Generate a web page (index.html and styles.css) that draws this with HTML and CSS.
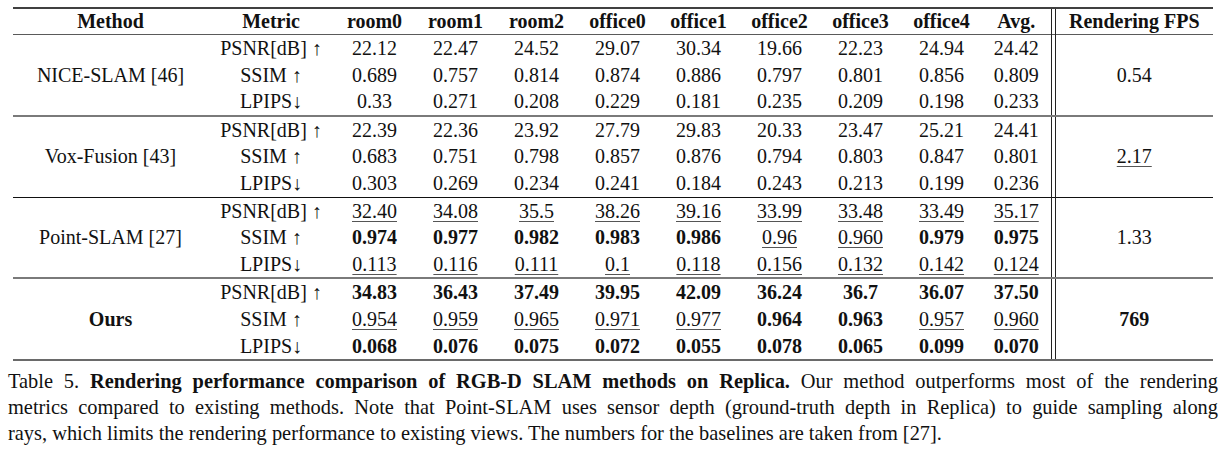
FILE: index.html
```html
<!DOCTYPE html>
<html>
<head>
<meta charset="utf-8">
<link rel="stylesheet" href="styles.css">
</head>
<body>
<table class="results">
  <colgroup>
    <col class="c-method"><col class="c-metric">
    <col class="c-val"><col class="c-val"><col class="c-val"><col class="c-val">
    <col class="c-val"><col class="c-val"><col class="c-val"><col class="c-val">
    <col class="c-avg"><col class="c-sep"><col class="c-fps">
  </colgroup>
  <thead>
    <tr>
      <th>Method</th><th>Metric</th><th>room0</th><th>room1</th><th>room2</th><th>office0</th><th>office1</th><th>office2</th><th>office3</th><th>office4</th><th>Avg.</th><td class="sep"></td><th>Rendering FPS</th>
    </tr>
  </thead>
  <tbody>
    <tr><td rowspan="3">NICE-SLAM [46]</td><td>PSNR[dB] ↑</td><td>22.12</td><td>22.47</td><td>24.52</td><td>29.07</td><td>30.34</td><td>19.66</td><td>22.23</td><td>24.94</td><td>24.42</td><td class="sep"></td><td rowspan="3">0.54</td></tr>
    <tr><td>SSIM ↑</td><td>0.689</td><td>0.757</td><td>0.814</td><td>0.874</td><td>0.886</td><td>0.797</td><td>0.801</td><td>0.856</td><td>0.809</td><td class="sep"></td></tr>
    <tr><td>LPIPS↓</td><td>0.33</td><td>0.271</td><td>0.208</td><td>0.229</td><td>0.181</td><td>0.235</td><td>0.209</td><td>0.198</td><td>0.233</td><td class="sep"></td></tr>
  </tbody>
  <tbody class="dark">
    <tr><td rowspan="3">Vox-Fusion [43]</td><td>PSNR[dB] ↑</td><td>22.39</td><td>22.36</td><td>23.92</td><td>27.79</td><td>29.83</td><td>20.33</td><td>23.47</td><td>25.21</td><td>24.41</td><td class="sep"></td><td rowspan="3"><span class="u">2.17</span></td></tr>
    <tr><td>SSIM ↑</td><td>0.683</td><td>0.751</td><td>0.798</td><td>0.857</td><td>0.876</td><td>0.794</td><td>0.803</td><td>0.847</td><td>0.801</td><td class="sep"></td></tr>
    <tr><td>LPIPS↓</td><td>0.303</td><td>0.269</td><td>0.234</td><td>0.241</td><td>0.184</td><td>0.243</td><td>0.213</td><td>0.199</td><td>0.236</td><td class="sep"></td></tr>
  </tbody>
  <tbody class="black">
    <tr><td rowspan="3">Point-SLAM [27]</td><td>PSNR[dB] ↑</td><td><span class="u">32.40</span></td><td><span class="u">34.08</span></td><td><span class="u">35.5</span></td><td><span class="u">38.26</span></td><td><span class="u">39.16</span></td><td><span class="u">33.99</span></td><td><span class="u">33.48</span></td><td><span class="u">33.49</span></td><td><span class="u">35.17</span></td><td class="sep"></td><td rowspan="3">1.33</td></tr>
    <tr><td>SSIM ↑</td><td class="b">0.974</td><td class="b">0.977</td><td class="b">0.982</td><td class="b">0.983</td><td class="b">0.986</td><td><span class="u">0.96</span></td><td><span class="u">0.960</span></td><td class="b">0.979</td><td class="b">0.975</td><td class="sep"></td></tr>
    <tr><td>LPIPS↓</td><td><span class="u">0.113</span></td><td><span class="u">0.116</span></td><td><span class="u">0.111</span></td><td><span class="u">0.1</span></td><td><span class="u">0.118</span></td><td><span class="u">0.156</span></td><td><span class="u">0.132</span></td><td><span class="u">0.142</span></td><td><span class="u">0.124</span></td><td class="sep"></td></tr>
  </tbody>
  <tbody class="dark">
    <tr><td rowspan="3" class="b">Ours</td><td>PSNR[dB] ↑</td><td class="b">34.83</td><td class="b">36.43</td><td class="b">37.49</td><td class="b">39.95</td><td class="b">42.09</td><td class="b">36.24</td><td class="b">36.7</td><td class="b">36.07</td><td class="b">37.50</td><td class="sep"></td><td rowspan="3" class="b">769</td></tr>
    <tr><td>SSIM ↑</td><td><span class="u">0.954</span></td><td><span class="u">0.959</span></td><td><span class="u">0.965</span></td><td><span class="u">0.971</span></td><td><span class="u">0.977</span></td><td class="b">0.964</td><td class="b">0.963</td><td><span class="u">0.957</span></td><td><span class="u">0.960</span></td><td class="sep"></td></tr>
    <tr><td>LPIPS↓</td><td class="b">0.068</td><td class="b">0.076</td><td class="b">0.075</td><td class="b">0.072</td><td class="b">0.055</td><td class="b">0.078</td><td class="b">0.065</td><td class="b">0.099</td><td class="b">0.070</td><td class="sep"></td></tr>
  </tbody>
</table>
<div class="caption">
  <span class="line">Table 5. <b>Rendering performance comparison of RGB-D SLAM methods on Replica.</b> Our method outperforms most of the rendering</span>
  <span class="line">metrics compared to existing methods. Note that Point-SLAM uses sensor depth (ground-truth depth in Replica) to guide sampling along</span>
  <span class="line last">rays, which limits the rendering performance to existing views. The numbers for the baselines are taken from [27].</span>
</div>
</body>
</html>
```
FILE: styles.css
```css
html, body {
  margin: 0;
  padding: 0;
  background: #fff;
}
body {
  font-family: "Liberation Serif", "Times New Roman", serif;
  font-size: 20px;
  color: #111;
}
.results {
  margin: 7px 0 0 13px;
  width: 1200px;
  table-layout: fixed;
  border-collapse: collapse;
  border-top: 2px solid #404040;
  border-bottom: 2px solid #6a6a6a;
}
.c-method { width: 195px; }
.c-metric { width: 126px; }
.c-val { width: 81px; }
.c-avg { width: 69px; }
.c-sep { width: 4px; }
.c-fps { width: 158px; }
.results th,
.results td {
  padding: 0;
  text-align: center;
  vertical-align: middle;
  white-space: nowrap;
  line-height: 26.6px;
}
.results th {
  font-weight: bold;
  line-height: 25px;
}
.results thead tr {
  border-bottom: 1px solid #5a5a5a;
}
.results tbody.dark {
  border-top: 2px solid #7a7a7a;
}
.results tbody.black {
  border-top: 1px solid #111;
}
.results .sep {
  border-left: 1px solid #222;
  border-right: 1px solid #222;
}
.b { font-weight: bold; }
.u {
  text-decoration: underline;
  text-decoration-thickness: 1px;
  text-underline-offset: 3px;
  text-decoration-color: #555;
}
.caption {
  margin: 7px 0 0 8px;
  width: 1210px;
  font-size: 20.4px;
  line-height: 26px;
}
.caption .line {
  display: block;
  text-align: justify;
  text-align-last: justify;
  white-space: nowrap;
}
.caption .line.last {
  text-align-last: left;
}
```
